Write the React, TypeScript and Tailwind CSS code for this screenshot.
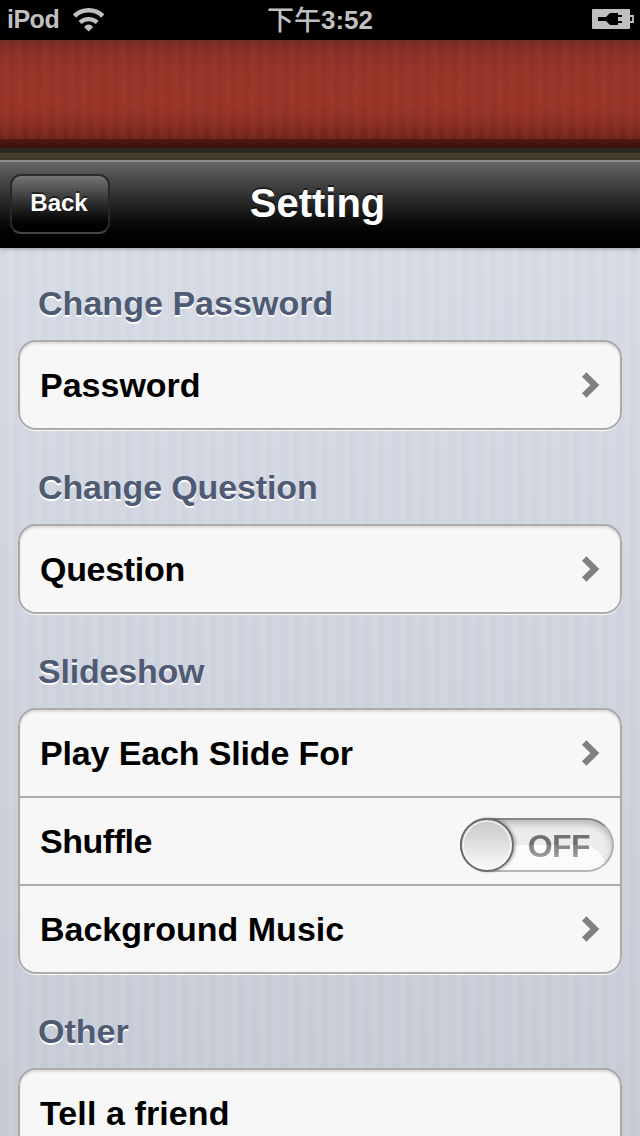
type Row = {
  label: string;
  tracking?: string;
  control?: "chevron" | "switch";
};

type Section = {
  title: string;
  tracking?: string;
  rows: Row[];
};

const sections: Section[] = [
  {
    title: "Change Password",
    tracking: "tracking-[0.04px]",
    rows: [{ label: "Password", control: "chevron" }],
  },
  {
    title: "Change Question",
    tracking: "tracking-[-0.12px]",
    rows: [{ label: "Question", tracking: "tracking-[-0.3px]", control: "chevron" }],
  },
  {
    title: "Slideshow",
    tracking: "tracking-[-0.2px]",
    rows: [
      { label: "Play Each Slide For", tracking: "tracking-[-0.14px]", control: "chevron" },
      { label: "Shuffle", tracking: "tracking-[-0.45px]", control: "switch" },
      { label: "Background Music", control: "chevron" },
    ],
  },
  { title: "Other", rows: [{ label: "Tell a friend", tracking: "tracking-[0.1px]" }] },
];

function StatusBar() {
  return (
    <div className="grid h-10 shrink-0 grid-cols-3 items-center bg-black pb-0.5 text-[26px] leading-[38px] font-bold text-[#bfbfbf]">
      <div className="flex items-center pl-[7px]">
        <span className="w-[66px] text-[25px] tracking-[-0.5px]">iPod</span>
        <svg className="relative top-px" width="32" height="24" viewBox="0 0 32 24" fill="none" stroke="#bfbfbf">
          <path d="M1.4 8a20.6 20.6 0 0 1 28.4 0" strokeWidth="4.6" />
          <path d="M7 14.6a12.4 12.4 0 0 1 17.2 0" strokeWidth="4.2" />
          <path d="M15.6 23.4l-4.4-4.2c1-1.6 2.4-2.6 4.4-2.6s3.4 1 4.4 2.6z" fill="#bfbfbf" stroke="none" />
        </svg>
      </div>
      <div className="flex items-center justify-center whitespace-nowrap">
        <span className="relative top-0.5 text-[27px] font-medium">下午</span>
        <span className="relative top-px">3:52</span>
      </div>
      <div className="flex justify-end pr-[6px]">
        <svg width="42" height="20" viewBox="0 0 42 20">
          <rect width="38" height="20" rx="1" fill="#bfbfbf" />
          <path d="M38 7h3v6h-3" fill="none" stroke="#bfbfbf" strokeWidth="1.8" />
          <path d="M6 8h8l4-4h8v2h4v2h-4v4h4v2h-4v2h-8l-4-4H6z" fill="#000" />
        </svg>
      </div>
    </div>
  );
}

function Banner() {
  return (
    <div className="flex h-[120px] shrink-0 flex-col">
      <div className="h-[99px] bg-[repeating-linear-gradient(90deg,rgba(60,20,20,0.05)_0px,rgba(180,60,40,0.18)_6px,rgba(60,20,20,0.05)_12px,rgba(60,20,20,0.05)_13px),linear-gradient(#702a22_0px,#86302a_10px,#97352a_30px,#9a352a_66px,#8c3025_82px,#6c241b_99px)]" />
      <div className="h-[9px] bg-linear-to-b from-[#511812] to-[#3b110d]" />
      <div className="h-[5px] bg-[#2c2a20]" />
      <div className="h-[7px] bg-[#453e2e]" />
    </div>
  );
}

function NavBar() {
  return (
    <div className="relative z-10 grid h-22 shrink-0 grid-cols-[1fr_auto_1fr] items-center border-t-2 border-[#8c8c8c] bg-linear-to-b from-[#666] to-black pr-[5px] pb-[3px] shadow-[0_1px_4px_rgba(0,0,0,0.3)]">
      <button className="ml-[10px] h-[60px] w-[100px] rounded-[11px] border-2 border-t-[#2a2a2a] border-r-[#262626] border-b-[#444] border-l-[#262626] bg-linear-to-b from-[#7b7b7b] to-black bg-origin-border pr-[2px] pb-[2px] text-[24px] font-bold text-white [text-shadow:0_-2px_0_rgba(0,0,0,0.5)]">
        Back
      </button>
      <h1 className="relative -top-px text-[40px] leading-none font-bold text-white [text-shadow:0_-2px_0_rgba(0,0,0,0.5)]">
        Setting
      </h1>
    </div>
  );
}

function Chevron() {
  return (
    <svg className="mr-5" width="19" height="26" viewBox="0 0 19 26">
      <path d="M3.2 2.4L13.8 13L3.2 23.6" fill="none" stroke="#808080" strokeWidth="6.4" />
    </svg>
  );
}

function OffSwitch() {
  return (
    <div className="relative mt-2 mr-[6px] h-[54px] w-[154px]">
      <div className="relative flex h-full justify-end overflow-hidden rounded-full border-2 border-t-[#878787] border-r-[#b0b0b0] border-b-[#b5b5b5] border-l-[#777] bg-[#ececec] pr-[22px] shadow-[inset_0_4px_6px_rgba(0,0,0,0.22)]">
        <div className="absolute right-[7px] bottom-0 h-[25px] w-[110px] rounded-tr-[22px] bg-[#fbfbfb]" />
        <span className="relative bg-linear-to-b from-[#707070] from-50% via-[#808080] via-50% to-[#a4a4a4] to-80% bg-clip-text text-[32px] leading-[52px] font-bold tracking-[-0.6px] text-transparent">
          OFF
        </span>
      </div>
      <div className="absolute top-0 left-0 size-[54px] rounded-full border-2 border-[#6c6c6c] bg-linear-to-b from-[#c8c8c8] to-[#fafafa] shadow-[inset_0_0_0_2px_rgba(255,255,255,0.6),2px_0_3px_rgba(0,0,0,0.25)]" />
    </div>
  );
}

function SettingsSection({ title, tracking = "", rows }: Section) {
  return (
    <section className="mb-10">
      <h2
        className={`mb-5 pl-5 text-[34px] leading-[34px] font-bold text-[#4f5a73] [text-shadow:0_2px_0_#fff] ${tracking}`}
      >
        {title}
      </h2>
      <div className="divide-y-2 divide-[#ababab] rounded-[18px] border-2 border-[#ababab] bg-[#f7f7f7] shadow-[0_1px_0_rgba(255,255,255,0.9),inset_0_2px_2px_rgba(0,0,0,0.1)]">
        {rows.map((row) => (
          <div key={row.label} className="box-content flex h-[86px] items-center justify-between pl-5">
            <span className={`text-[34px] leading-none font-bold text-black ${row.tracking ?? ""}`}>
              {row.label}
            </span>
            {row.control === "chevron" && <Chevron />}
            {row.control === "switch" && <OffSwitch />}
          </div>
        ))}
      </div>
    </section>
  );
}

export default function App() {
  return (
    <div className="flex h-[1136px] w-[640px] flex-col overflow-hidden bg-[#cdd1db] font-['Liberation_Sans','Noto_Sans_CJK_TC',sans-serif]">
      <StatusBar />
      <Banner />
      <NavBar />
      <main className="flex-1 overflow-hidden bg-[repeating-linear-gradient(90deg,rgba(110,125,160,0.03)_0px,rgba(110,125,160,0.03)_6px,rgba(255,255,255,0.02)_8px,rgba(255,255,255,0.02)_14px),linear-gradient(#d8dce6,#c8ccd6)] px-[18px] pt-[38px]">
        {sections.map((section) => (
          <SettingsSection key={section.title} {...section} />
        ))}
      </main>
    </div>
  );
}
